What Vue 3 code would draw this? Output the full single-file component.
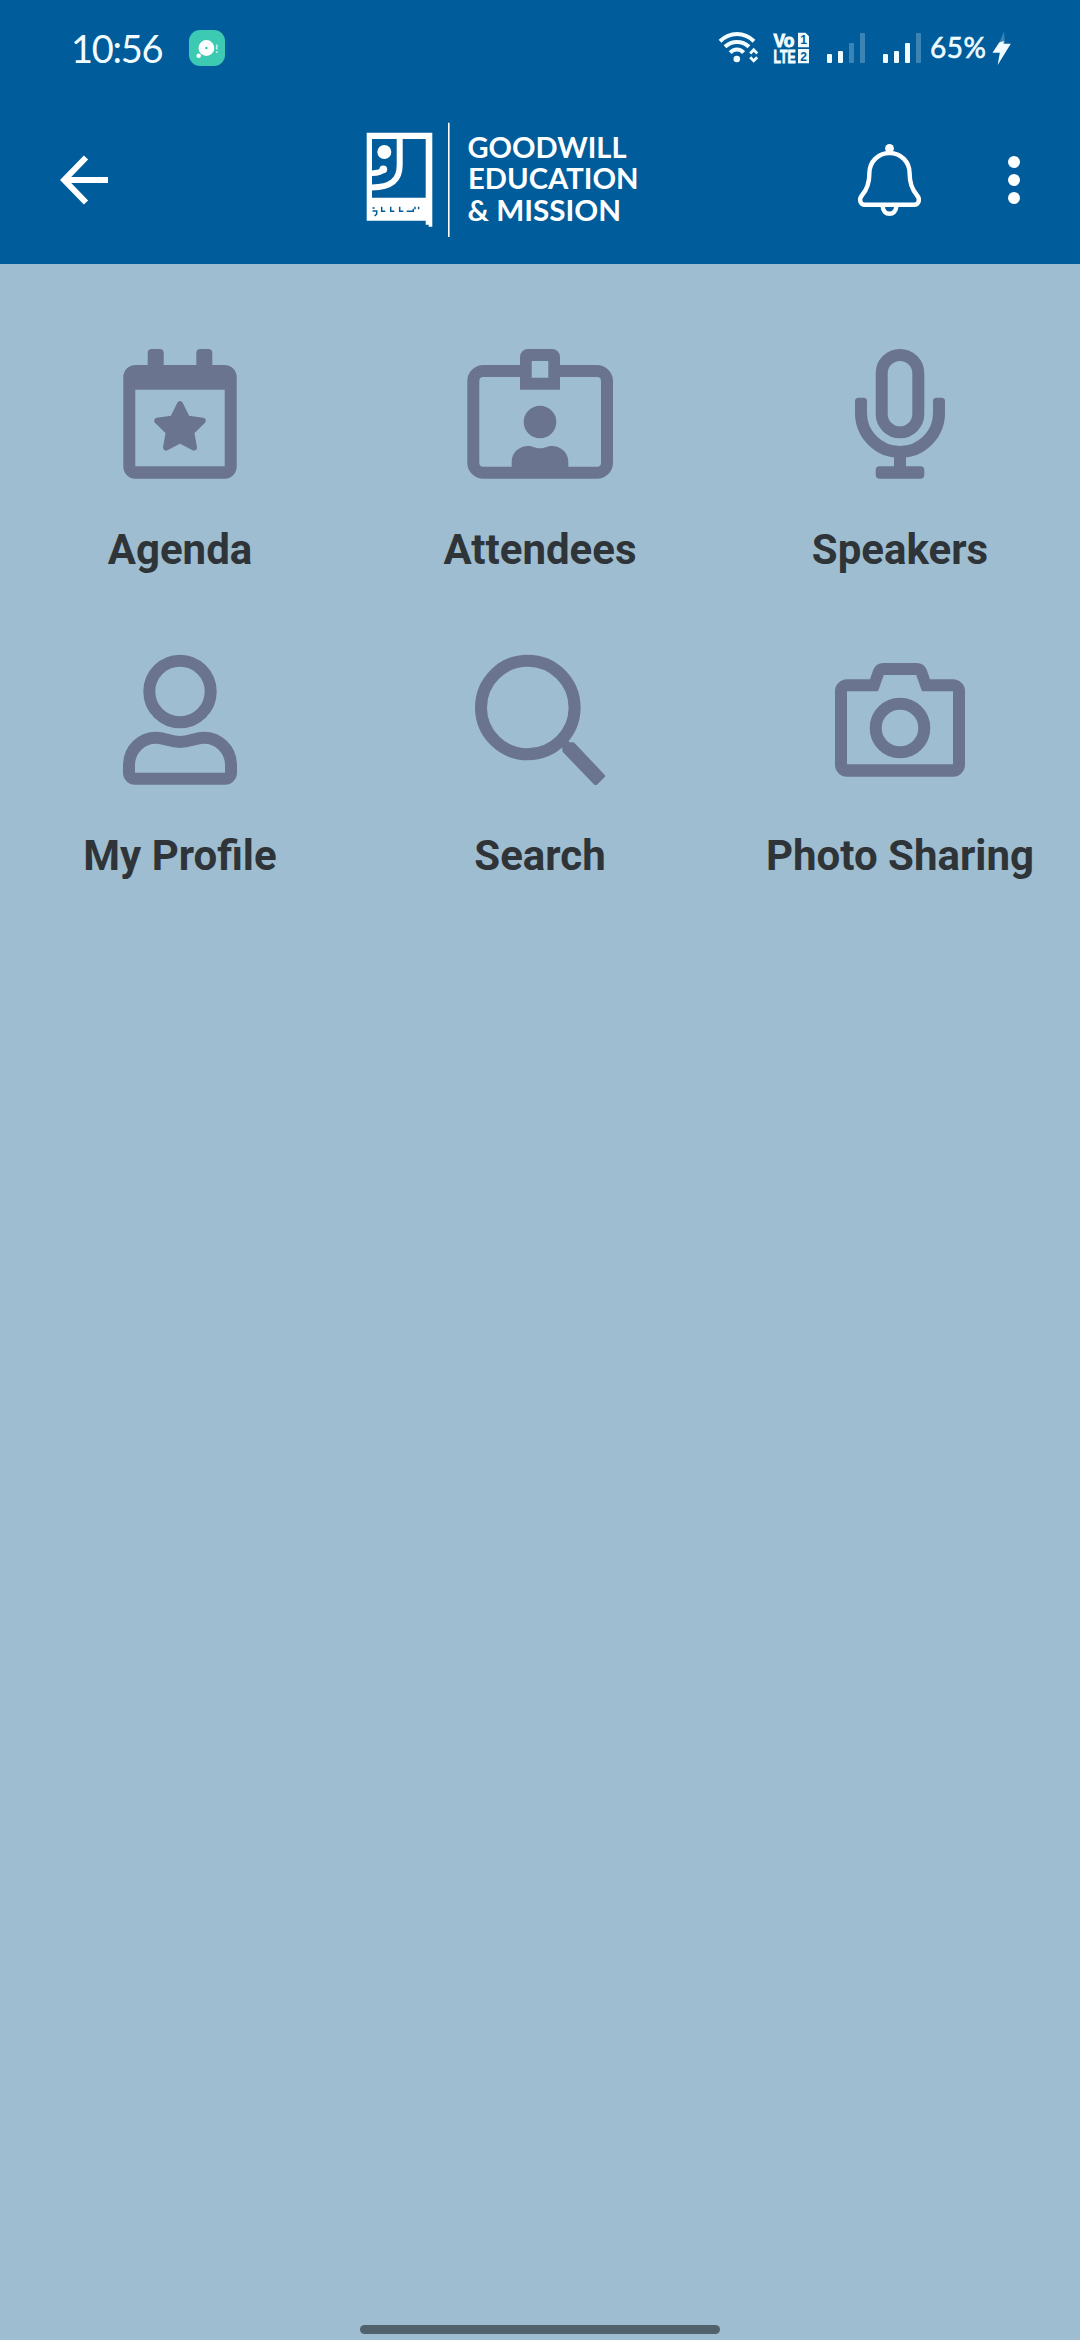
<template>
  <div class="screen">
    <header class="header">
      <div class="status-bar">
        <span class="clock">10:56</span>
        <svg class="app-badge" viewBox="0 0 36 36">
          <rect width="36" height="36" rx="11" fill="#3dcab2" />
          <circle cx="17.4" cy="18" r="7.9" fill="#fff" />
          <circle cx="17.4" cy="18" r="1.2" fill="#3dcab2" />
          <circle cx="9.7" cy="25.7" r="2.3" fill="#fff" />
          <path d="M27.8 14.5v5M27.8 21.3v1.6" stroke="#b8eee5" stroke-width="1.8" />
        </svg>

        <div class="status-icons">
          <svg class="wifi" viewBox="0 0 42 34" fill="none" stroke="currentColor" stroke-width="4">
            <path d="M2 10.2C12 .6 26 .6 36 10.2" />
            <path d="M7 15.8C14 9.4 24 9.4 31 15.8" />
            <path d="M12.2 21.6C16 17.4 22 17.4 25.6 21.6" />
            <circle cx="18.8" cy="28" r="3.3" fill="currentColor" stroke="none" />
            <path d="M32.2 22.4l3.5-3.6 3.5 3.6M32.2 26.2l3.5 3.6 3.5-3.6" stroke-width="2.8" />
          </svg>
          <svg class="volte" viewBox="0 0 36 36">
            <g class="volte-text">
              <text x="0.5" y="16.6" textLength="21" lengthAdjust="spacingAndGlyphs">Vo</text>
              <text x="0.5" y="32.8" textLength="22" lengthAdjust="spacingAndGlyphs">LTE</text>
            </g>
            <path d="M25 2.8h7.5l3.5 3.5v11H25zM25 19h11v14.2H25z" fill="currentColor" />
            <g class="volte-sim">
              <text x="30.5" y="14.4" text-anchor="middle">1</text>
              <text x="30.5" y="30.5" text-anchor="middle">2</text>
            </g>
          </svg>
          <svg v-for="(level, i) in signals" :key="i" class="signal" viewBox="0 0 38 30">
            <rect
              v-for="(h, n) in barHeights"
              :key="n"
              :x="n * 11"
              :y="30 - h"
              width="5"
              :height="h"
              rx="1"
              fill="currentColor"
              :opacity="n < level ? 1 : 0.25"
            />
          </svg>
          <span class="battery">65%</span>
          <svg class="bolt" viewBox="0 0 22 36">
            <path d="M14 1.5L9 13.5h6z" fill="currentColor" opacity="0.25" />
            <path d="M9.2 12.5L2.5 22.8h7.3L7.7 35 20.8 13.8h-7.4l.6-2.8z" fill="currentColor" />
          </svg>
        </div>
      </div>

      <nav class="app-bar">
        <button class="icon-btn back" aria-label="Back">
          <svg viewBox="0 0 48 52" fill="none" stroke="#fff" stroke-width="6">
            <path d="M48 26H5M26 3.5L4.2 26 26 48.5" />
          </svg>
        </button>

        <svg class="logo" viewBox="0 0 280 120">
          <path
            d="M6.7 12.7h65.6v94h-3.6v-2h-3v-4H6.7zM12 19v58.7h53.7V19z"
            fill="#fff"
            fill-rule="evenodd"
          />
          <path d="M39.7 18v27C39.7 60 31 67.4 12 67.4" fill="none" stroke="#fff" stroke-width="6" />
          <circle cx="24.3" cy="32" r="7" fill="#fff" />
          <path d="M12 53.2C18 53.2 22 51.6 24.5 48.6" fill="none" stroke="#fff" stroke-width="5.6" />
          <circle cx="23.3" cy="49.3" r="3.9" fill="#fff" />
          <path
            d="M12.5 88h2.2M12.5 91h4.2v3l-2 2M21.7 86.7v4.5h3.6M30.7 86.7v4.5h3.6M39.7 86.7v4.5h3.6M46.7 91.2h6.6v-2.4M55 86.7v2.6M58.6 86.7v2.6"
            fill="none"
            stroke="#005c9b"
            stroke-width="1.5"
          />
          <path d="M88.8 2.7V117" stroke="#fff" stroke-width="1.6" />
          <g class="logo-text">
            <text x="107.5" y="38.4" textLength="159" lengthAdjust="spacingAndGlyphs">GOODWILL</text>
            <text x="108" y="68.6" textLength="170.5" lengthAdjust="spacingAndGlyphs">EDUCATION</text>
            <text x="107.5" y="100.9" textLength="153.5" lengthAdjust="spacingAndGlyphs">&amp; MISSION</text>
          </g>
        </svg>

        <button class="icon-btn bell" aria-label="Notifications">
          <svg viewBox="0 0 69 80" fill="none" stroke="#fff" stroke-width="4.4">
            <circle cx="34.5" cy="8.4" r="4.4" fill="#fff" stroke="none" />
            <path
              d="M34.5 13C23 13 14.4 22 14.4 33C14.4 44 12 49.5 7.2 55C3.4 59.5 5.2 64.7 10 64.7H59C63.8 64.7 65.6 59.5 61.8 55C57 49.5 54.6 44 54.6 33C54.6 22 46 13 34.5 13z"
            />
            <path d="M27.8 65.5v1.6a6.7 6.7 0 0 0 13.4 0v-1.6" />
          </svg>
        </button>
        <button class="icon-btn more" aria-label="More options">
          <svg viewBox="0 0 12 48" fill="#fff">
            <circle cx="6" cy="6" r="6" />
            <circle cx="6" cy="24" r="6" />
            <circle cx="6" cy="42" r="6" />
          </svg>
        </button>
      </nav>
    </header>

    <main class="menu">
      <a v-for="item in items" :key="item.id" class="menu-item">
        <svg class="menu-icon" viewBox="0 0 150 134">
          <g v-if="item.id === 'agenda'" class="fill">
            <path
              d="M30.3 18h12.4V6a4 4 0 0 1 4-4h8a4 4 0 0 1 4 4v12h32.6V6a4 4 0 0 1 4-4h8a4 4 0 0 1 4 4v12h12.4a12 12 0 0 1 12 12v89.7a12 12 0 0 1-12 12H30.3a12 12 0 0 1-12-12V30a12 12 0 0 1 12-12zM30.3 42.7v76.6h89.4V42.7z"
              fill-rule="evenodd"
            />
            <path
              class="star"
              d="M75 57.2L82 71.4 97.7 73.8 86.2 85 89 100.5 75 93.3 61 100.5 63.8 85 52.3 73.8 68 71.4z"
            />
          </g>

          <g v-else-if="item.id === 'attendees'">
            <!-- card outline, open behind the clip -->
            <path
              class="line"
              d="M56 24H18.3a10 10 0 0 0-10 10v81.7a10 10 0 0 0 10 10H132a10 10 0 0 0 10-10V34a10 10 0 0 0-10-10H94"
            />
            <path
              class="fill"
              d="M55 42.7V10a8 8 0 0 1 8-8h24a8 8 0 0 1 8 8v32.7zM66.7 14v16.7h16.6V14z"
              fill-rule="evenodd"
            />
            <circle class="fill" cx="75" cy="75" r="16.3" />
            <path
              class="fill"
              d="M46.7 122v-7.5C46.7 106 54 99 63 99C68 99 70 101.3 75 101.3S82 99 87 99C96 99 103.3 106 103.3 114.5V122z"
            />
          </g>

          <g v-else-if="item.id === 'speakers'">
            <rect class="line" x="56.7" y="8" width="36.6" height="77.3" rx="18.3" />
            <path class="line" d="M36 54v12a39 39 0 0 0 78 0V54M75 104v18" />
            <g class="fill">
              <rect x="30" y="50.7" width="12" height="12" rx="3.5" />
              <rect x="108" y="50.7" width="12" height="12" rx="3.5" />
              <rect x="50.7" y="119.3" width="48.6" height="12.4" rx="4" />
            </g>
          </g>

          <g v-else-if="item.id === 'profile'" class="line">
            <circle cx="75" cy="38.5" r="30.7" />
            <path
              d="M24 112C24 96 37 84.7 51 84.7C60 84.7 65 89 75 89S90 84.7 99 84.7C113 84.7 126 96 126 112v7.7a6 6 0 0 1-6 6H30a6 6 0 0 1-6-6z"
            />
          </g>

          <g v-else-if="item.id === 'search'">
            <circle class="line" cx="62.8" cy="54.5" r="46.8" />
            <path
              class="fill"
              d="M97.3 93.5L103.2 87.3 104.5 89.3H107.5Q109 89.3 110 90.5L139.3 121.4Q140.8 123 139.3 124.6L132.3 131.4Q130.7 132.8 129.1 131.4L98.3 99.6Q97.3 98.5 97.3 97z"
            />
          </g>

          <g v-else-if="item.id === 'photos'">
            <path
              class="fill"
              d="M22 26.3H45L48.2 17A11 11 0 0 1 58.5 10H91.5A11 11 0 0 1 101.8 17L105 26.3H128A12 12 0 0 1 140 38.3V111.7A12 12 0 0 1 128 123.7H22A12 12 0 0 1 10 111.7V38.3A12 12 0 0 1 22 26.3zM22 38.3V111.3H128V38.3H97L91.2 22H58.8L53 38.3z"
              fill-rule="evenodd"
            />
            <circle class="line" cx="75" cy="75" r="24.3" />
          </g>
        </svg>
        <span class="menu-label">{{ item.label }}</span>
      </a>
    </main>

    <footer class="gesture-area">
      <div class="gesture-bar"></div>
    </footer>
  </div>
</template>

<script setup>
const items = [
  { id: 'agenda', label: 'Agenda' },
  { id: 'attendees', label: 'Attendees' },
  { id: 'speakers', label: 'Speakers' },
  { id: 'profile', label: 'My Profile' },
  { id: 'search', label: 'Search' },
  { id: 'photos', label: 'Photo Sharing' }
]

// filled bars for SIM 1 and SIM 2
const signals = [2, 3]
const barHeights = [9, 12, 20, 30]
</script>

<style>
body {
  margin: 0;
  background: #9fbdd0;
}
</style>

<style scoped>
.screen {
  display: flex;
  flex-direction: column;
  width: 1080px;
  height: 2340px;
  background: #9fbdd0;
  font-family: Roboto, sans-serif;
}

.screen svg {
  display: block;
  flex-shrink: 0;
}

.header {
  height: 264px;
  background: #005c9b;
}

.status-bar {
  display: flex;
  align-items: center;
  height: 96px;
  padding: 0 68px 0 71px;
  color: #f0fcff;
}

.clock {
  width: 118px;
  font-family: Lato, sans-serif;
  font-size: 38px;
  letter-spacing: -1.3px;
  line-height: 94px;
}

.app-badge {
  width: 36px;
  height: 36px;
}

.status-icons {
  display: flex;
  align-items: center;
  margin-left: auto;
}

.wifi {
  width: 42px;
  height: 34px;
}

.volte {
  width: 36px;
  height: 36px;
  margin-left: 13px;
}

.volte-text {
  fill: currentColor;
  stroke: currentColor;
  stroke-width: 0.9px;
  font: bold 18px "Liberation Sans", sans-serif;
}

.volte-sim {
  fill: #005c9b;
  font: bold 12px "Liberation Sans", sans-serif;
}

.signal {
  width: 38px;
  height: 30px;
  margin-left: 18px;
}

.battery {
  width: 58px;
  margin-left: 9px;
  font-family: Lato, sans-serif;
  font-size: 28px;
  letter-spacing: 0.5px;
  line-height: 34px;
  padding-bottom: 2px;
  -webkit-text-stroke: 0.6px currentColor;
}

.bolt {
  width: 22px;
  height: 36px;
  margin-left: 2px;
}

.app-bar {
  display: flex;
  align-items: center;
  height: 168px;
  padding: 0 60px;
}

.icon-btn {
  padding: 0;
  border: none;
  background: none;
}

.back {
  width: 48px;
}

.logo {
  width: 280px;
  height: 120px;
  margin-left: 252px;
}

.logo-text {
  fill: #fff;
  font: bold 29px Lato, sans-serif;
}

.bell {
  width: 69px;
  margin-left: 215px;
}

.more {
  width: 12px;
  margin-left: 84px;
}

.menu {
  display: grid;
  grid-template-columns: repeat(3, 360px);
  grid-auto-rows: 306px;
  padding-top: 83px;
  flex: 1;
  align-content: start;
}

.menu-item {
  display: flex;
  flex-direction: column;
  align-items: center;
}

.menu-icon {
  width: 150px;
  height: 134px;
}

.fill {
  fill: #6a748f;
}

.line {
  fill: none;
  stroke: #6a748f;
  stroke-width: 12;
}

.star {
  stroke: #6a748f;
  stroke-width: 6;
  stroke-linejoin: round;
}

.menu-label {
  margin-top: 44px;
  color: #2e3437;
  font-size: 42px;
  font-weight: 700;
  line-height: 50px;
  white-space: nowrap;
}

.gesture-area {
  display: flex;
  justify-content: center;
  padding-bottom: 6px;
}

.gesture-bar {
  width: 360px;
  height: 9px;
  border-radius: 5px;
  background: #51626c;
}
</style>
